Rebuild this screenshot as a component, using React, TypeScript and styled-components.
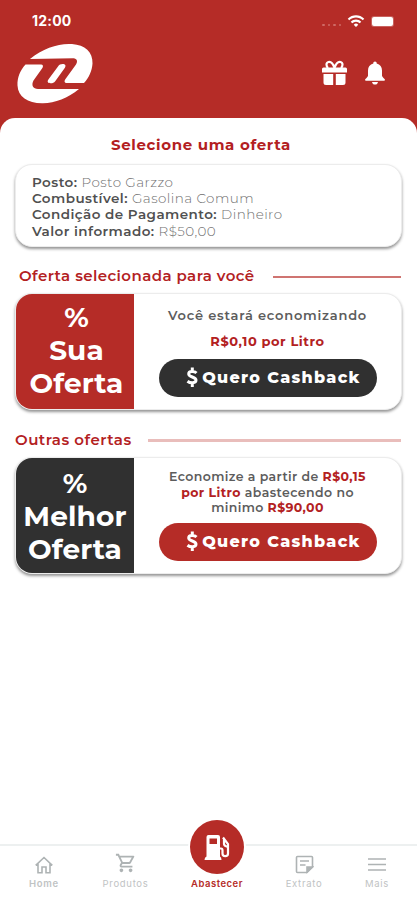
import React from 'react';
import styled, { createGlobalStyle } from 'styled-components';
import { MdOutlineShoppingCart, MdWifi } from 'react-icons/md';

const RED = '#b52c27';
const DARK = '#303030';

const GlobalStyle = createGlobalStyle`
  * { box-sizing: border-box; }
  body { margin: 0; font-family: Montserrat, Inter, sans-serif; background: #fff; }
`;

const Screen = styled.div`
  width: 417px;
  height: 900px;
  display: flex;
  flex-direction: column;
  background: ${RED};
  overflow: hidden;
`;

const Header = styled.header`
  height: 118px;
  flex: none;
`;

const StatusBar = styled.div`
  height: 40px;
  display: flex;
  align-items: center;
  justify-content: space-between;
  padding: 1px 21px 0 32px;
  color: #fff;
`;

const Clock = styled.span`
  font-family: Inter, sans-serif;
  font-size: 14px;
  font-weight: 700;
  letter-spacing: 0.2px;
`;

const StatusIcons = styled.div`
  display: flex;
  align-items: center;
`;

const SignalDots = styled.div`
  display: flex;
  gap: 3px;
  margin: 9px 6px 0 0;
  i { width: 2.5px; height: 2.5px; border-radius: 2px; background: #cf6a66; }
`;

const Battery = styled.div`
  width: 21px;
  height: 9px;
  margin: 1px 3px 0 7px;
  border-radius: 2px;
  background: #fff;
  box-shadow: 0 0 0 1px #c9625e;
`;

const Brand = styled.div`
  display: flex;
  align-items: center;
  justify-content: space-between;
  padding: 2px 32px 0 16px;
`;

const Actions = styled.div`
  display: flex;
  align-items: center;
  gap: 17px;
  color: #fff;
`;

const Sheet = styled.main`
  flex: 1;
  display: flex;
  flex-direction: column;
  background: #fff;
  border-radius: 15px 15px 0 0;
  padding: 0 15px;
`;

const Title = styled.h1`
  margin: 16px 0 8px;
  padding-right: 15px;
  font-size: 15px;
  line-height: 22px;
  font-weight: 700;
  letter-spacing: 0.65px;
  text-align: center;
  color: #b3201f;
`;

const Card = styled.section`
  flex: none;
  width: 387px;
  display: flex;
  border: 1px solid #ececec;
  border-radius: 17px;
  background: #fff;
  box-shadow: 0 2px 3px rgba(0, 0, 0, 0.42);
  overflow: hidden;
`;

const InfoCard = styled(Card)`
  height: 83px;
  flex-direction: column;
  padding: 8.5px 16px;
`;

const InfoRow = styled.div`
  display: flex;
  gap: 4px;
  height: 16.4px;
  line-height: 16.4px;
  font-size: 13.5px;
  white-space: nowrap;
`;

const Label = styled.span`
  font-weight: 600;
  color: #505050;
  letter-spacing: 0.45px;
`;

const Value = styled.span`
  font-weight: 300;
  color: #707070;
  letter-spacing: 0.43px;
`;

const SectionHead = styled.div<{ $top: number; $indent: number; $ls: number; $gap: number; $faint?: boolean }>`
  display: flex;
  align-items: center;
  height: 22px;
  margin-top: ${p => p.$top}px;
  padding-left: ${p => p.$indent}px;
  h2 {
    margin: 0;
    font-size: 15px;
    font-weight: 600;
    white-space: nowrap;
    letter-spacing: ${p => p.$ls}px;
    color: #b3211f;
  }
  hr {
    flex: 1;
    border: 0;
    height: ${p => (p.$faint ? 3 : 2)}px;
    background: ${p => (p.$faint ? '#e9bdbb' : '#cf7471')};
    margin: 3px 1px 0 ${p => p.$gap}px;
  }
`;

const OfferCard = styled(Card)<{ $top: number }>`
  height: 117px;
  margin-top: ${p => p.$top}px;
`;

const OfferTag = styled.div<{ $bg: string; $top: number; $left: number }>`
  width: 118px;
  flex: none;
  background: ${p => p.$bg};
  color: #fff;
  font-size: 28px;
  font-weight: 700;
  line-height: 33px;
  letter-spacing: 0.1px;
  text-align: center;
  padding: ${p => p.$top}px 0 0 ${p => p.$left}px;
  white-space: nowrap;
`;

const OfferBody = styled.div`
  flex: 1;
  display: flex;
  flex-direction: column;
  align-items: center;
`;

const Line = styled.p<{ $h: number; $ls: number; $size?: number }>`
  margin: 0;
  height: ${p => p.$h}px;
  line-height: ${p => p.$h}px;
  font-size: ${p => p.$size || 13}px;
  font-weight: 600;
  letter-spacing: ${p => p.$ls}px;
  white-space: nowrap;
  color: #5c5c5c;
  b { color: #b3211f; font-weight: 700; }
`;

const Lines = styled.div<{ $top: number; $height: number }>`
  height: ${p => p.$height}px;
  padding-top: ${p => p.$top}px;
  text-align: center;
`;

const CashbackButton = styled.button<{ $bg: string }>`
  width: 218px;
  height: 38px;
  border: 0;
  border-radius: 19px;
  background: ${p => p.$bg};
  color: #fff;
  display: flex;
  align-items: center;
  justify-content: center;
  gap: 4px;
  padding: 0 0 2px 12px;
  font-family: inherit;
  font-size: 16px;
  font-weight: 800;
  letter-spacing: 1.3px;
  white-space: nowrap;
`;

const NavBar = styled.nav`
  height: 56px;
  flex: none;
  display: flex;
  background: #fff;
  border-top: 2px solid #edf0f0;
`;

const NavItem = styled.div<{ $w: number; $active?: boolean; $bold?: boolean }>`
  width: ${p => p.$w}px;
  display: flex;
  flex-direction: column;
  align-items: center;
  justify-content: flex-end;
  padding-bottom: 10px;
  gap: 4px;
  font-family: Inter, sans-serif;
  font-size: 9.5px;
  line-height: 12px;
  letter-spacing: ${p => (p.$active ? 0.5 : 0.7)}px;
  font-weight: ${p => (p.$active || p.$bold ? 600 : 400)};
  color: ${p => (p.$active ? '#b52c27' : '#bfc3c4')};
  svg { color: #aeb3b4; }
`;

const FuelButton = styled.div`
  width: 54px;
  height: 54px;
  flex: none;
  display: flex;
  align-items: center;
  justify-content: center;
  border-radius: 50%;
  background: ${RED};
  box-shadow: 0 0 0 2px #fff;
  && svg { color: #fff; }
`;

const Logo = () => (
  <svg width="78" height="62" viewBox="0 0 78 62" fill="#fff">
    <path d="M14 17C27 6 43 1 56 2c13 1 21 8 20.500 19.500C76 29 73 35.500 68 41H51c-2.800 0-3-1.800-1.500-4L60 22.500c2-3 1-6-2.500-6.200Z" />
    <path d="M9.500 22.500H25c2 0 2.500 1.700 1.400 3.400L17.500 38.500C15 43 17 47 22 47h41C52 56 39 61 27 61.200 12 61.500 2 55 1.500 43.500 1.200 35.500 4 28.500 9.500 22.500Z" />
    <path d="M42 24.500c1.200-1.700 2.600-2.400 4.700-2.400 2.700 0 3.500 1.700 2.200 3.600l-9.700 13.500c-1.200 1.600-2.400 2-4.600 2-3 0-3.600-1.700-2.200-3.700Z" />
  </svg>
);

const GiftIcon = () => (
  <svg width="27" height="26" viewBox="0 0 27 26" fill="currentColor">
    <path d="M2.500 7.500h22q1.500 0 1.500 1.500v3.500H1V9q0-1.500 1.500-1.500Z" />
    <path d="M2.500 14h9.700v11H5q-2.500 0-2.500-2.500ZM14.800 14h9.700v8.500q0 2.500-2.500 2.500h-7.200Z" />
    <path d="M13.500 8C12 3.500 10 1.500 7.500 2 4.800 2.500 5 6 7 8M13.500 8C15 3.500 17 1.500 19.500 2c2.700.5 2.500 4 .5 6" fill="none" stroke="currentColor" strokeWidth="2.200" />
  </svg>
);

const BellIcon = () => (
  <svg width="20" height="24" viewBox="0 0 20 24" fill="currentColor">
    <path d="M10 .5c1.100 0 1.700.7 1.700 1.900 3.400.8 5.300 3.400 5.300 7.100v5.300c0 1.400 3 3 3 4 0 .6-.4.900-1 .9H1c-.6 0-1-.3-1-.9 0-1 3-2.600 3-4V9.500c0-3.700 1.900-6.300 5.300-7.100C8.300 1.200 8.900.5 10 .5Z" />
    <path d="M7 21h6c-.3 1.700-1.400 2.600-3 2.600S7.300 22.700 7 21Z" />
  </svg>
);

const DollarIcon = () => (
  <svg width="12" height="22" viewBox="0 0 12 22" fill="none" stroke="#fff" strokeWidth="3">
    <path d="M10.500 7C8.500 5 2.700 4.600 2.700 7.900c0 3.600 7.300 2.600 7.300 6.200 0 3.300-5.500 3.400-8.500 1.100M6.300 1.500v4M6.300 17v4" />
  </svg>
);

const HomeIcon = () => (
  <svg width="18" height="18" viewBox="0 0 18 18" fill="none" stroke="currentColor" strokeWidth="1.600">
    <path d="M.7 9.300 9 1.500l8.300 7.800M3 7.500v9.200h4V11h4v5.700h4V7.500" />
  </svg>
);

const FuelIcon = () => (
  <svg width="26" height="27" viewBox="0 0 26 27">
    <path d="M4.500 1h9.500q2 0 2 2V22.500q1.500.5 1.500 3.500H.500q0-3 2-3.500V3q0-2 2-2Z" fill="#fff" />
    <path d="M5.500 4.500h7.500v5.500H5.500Z" fill={RED} />
    <path d="M16 14.500h1q1.500 0 1.500 2v3c0 3.500 5.500 3.500 5.500 0V10l-5-6.500M20 5v5q0 2 4 3" fill="none" stroke="#fff" strokeWidth="2.200" />
  </svg>
);

const NoteIcon = () => (
  <svg width="19" height="19" viewBox="0 0 19 19" fill="none" stroke="currentColor" strokeWidth="1.600">
    <path d="M2.500 1.500h14q1 0 1 1V12l-5.500 5.500H2.500q-1 0-1-1v-14q0-1 1-1Z" />
    <path d="M12 17v-5h5.500Z" fill="currentColor" />
    <path d="M5 6h9M5 10h5.500" />
  </svg>
);

const MenuIcon = () => (
  <svg width="18" height="19" viewBox="0 0 18 19" stroke="currentColor" strokeWidth="1.700">
    <path d="M0 4h18M0 9.500h18M0 15h18" />
  </svg>
);

export default function App() {
  return (
    <Screen>
      <GlobalStyle />
      <Header>
        <StatusBar>
          <Clock>12:00</Clock>
          <StatusIcons>
            <SignalDots><i /><i /><i /><i /></SignalDots>
            <MdWifi size={18} />
            <Battery />
          </StatusIcons>
        </StatusBar>
        <Brand>
          <Logo />
          <Actions>
            <GiftIcon />
            <BellIcon />
          </Actions>
        </Brand>
      </Header>
      <Sheet>
        <Title>Selecione uma oferta</Title>
        <InfoCard>
          <InfoRow><Label>Posto:</Label><Value>Posto Garzzo</Value></InfoRow>
          <InfoRow><Label>Combustível:</Label><Value>Gasolina Comum</Value></InfoRow>
          <InfoRow><Label>Condição de Pagamento:</Label><Value>Dinheiro</Value></InfoRow>
          <InfoRow><Label>Valor informado:</Label><Value>R$50,00</Value></InfoRow>
        </InfoCard>
        <SectionHead $top={17} $indent={4} $ls={0.42} $gap={18}>
          <h2>Oferta selecionada para você</h2><hr />
        </SectionHead>
        <OfferCard $top={7}>
          <OfferTag $bg={RED} $top={7} $left={3}>%<br />Sua<br />Oferta</OfferTag>
          <OfferBody>
            <Lines $top={8} $height={65}>
              <Line $h={26} $ls={0.78}>Você estará economizando</Line>
              <Line $h={26} $ls={0.55}><b>R$0,10 por Litro</b></Line>
            </Lines>
            <CashbackButton $bg={DARK}><DollarIcon />Quero Cashback</CashbackButton>
          </OfferBody>
        </OfferCard>
        <SectionHead $top={18} $indent={0} $ls={0.5} $gap={16} $faint>
          <h2>Outras ofertas</h2><hr />
        </SectionHead>
        <OfferCard $top={7}>
          <OfferTag $bg={DARK} $top={9} $left={0}>%<br />Melhor<br />Oferta</OfferTag>
          <OfferBody>
            <Lines $top={11} $height={65}>
              <Line $h={15.5} $size={12.5} $ls={0.4}>Economize a partir de <b>R$0,15</b></Line>
              <Line $h={15.5} $size={12.5} $ls={0.42}><b>por Litro</b> abastecendo no</Line>
              <Line $h={15.5} $size={12.5} $ls={0.4}>minimo <b>R$90,00</b></Line>
            </Lines>
            <CashbackButton $bg={RED}><DollarIcon />Quero Cashback</CashbackButton>
          </OfferBody>
        </OfferCard>
      </Sheet>
      <NavBar>
        <NavItem $w={88} $bold><HomeIcon />Home</NavItem>
        <NavItem $w={75}><MdOutlineShoppingCart size={22} />Produtos</NavItem>
        <NavItem $w={108} $active><FuelButton><FuelIcon /></FuelButton>Abastecer</NavItem>
        <NavItem $w={66}><NoteIcon />Extrato</NavItem>
        <NavItem $w={80}><MenuIcon />Mais</NavItem>
      </NavBar>
    </Screen>
  );
}
